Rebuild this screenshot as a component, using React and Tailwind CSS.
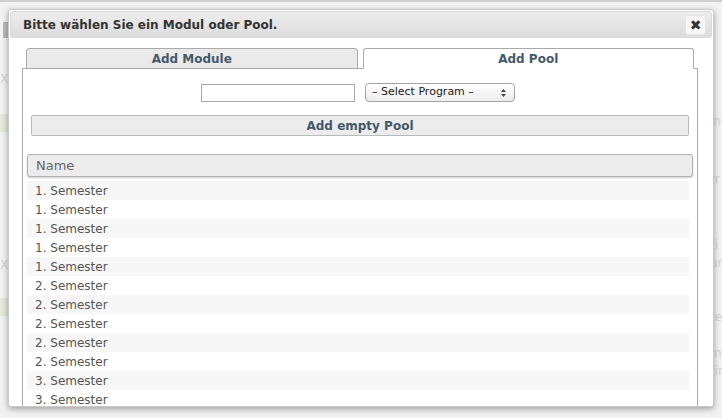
import React, { useState } from "react";

const rows = [
  "1. Semester",
  "1. Semester",
  "1. Semester",
  "1. Semester",
  "1. Semester",
  "2. Semester",
  "2. Semester",
  "2. Semester",
  "2. Semester",
  "2. Semester",
  "3. Semester",
  "3. Semester",
];

const font = { fontFamily: '"DejaVu Sans", Verdana, sans-serif' };

// faded page that sits behind the modal
const Backdrop = () => (
  <div className="absolute inset-0 bg-[#f2f2f2] text-[#c8c8c8] text-[12px]">
    <div className="h-[2px] bg-[#cfcfcf]" />
    <div className="flex">
      <div className="w-[24px] flex flex-col">
        <div className="mt-[20px] ml-[3px] w-[5px] h-[16px] bg-[#b9b9b9]" />
        <div className="mt-[32px] text-[#d2d2d2]">X3</div>
        <div className="mt-[26px] h-[18px] bg-[#e3ead9]" />
        <div className="mt-[124px] text-[#d2d2d2]">X3</div>
        <div className="mt-[24px] h-[18px] bg-[#e3ead9]" />
      </div>
      <div className="flex-1" />
      <div className="w-[12px] flex flex-col text-[#d2d2d2] leading-[18px]">
        <div className="mt-[110px]">In</div>
        <div className="mt-[40px]">rr</div>
        <div className="mt-[48px]">ti</div>
        <div>ur</div>
        <div className="mt-[18px]">:</div>
        <div>te</div>
        <div className="mt-[18px]">m</div>
        <div>tin</div>
      </div>
    </div>
  </div>
);

const App = () => {
  const [tab, setTab] = useState("pool");

  return (
    <div className="relative w-[722px] h-[418px] overflow-hidden" style={font}>
      <Backdrop />

      <div className="absolute left-[8px] top-[9px] w-[706px] h-[398px] bg-white border border-[#c9c9c9] rounded-[3px] shadow-[0_2px_6px_rgba(0,0,0,0.35)] p-[1px] flex flex-col overflow-hidden">
        {/* title bar */}
        <div className="h-[27px] shrink-0 flex items-center justify-between pl-[12px] pr-[5px] rounded-[3px] border border-[#d8d8d8] bg-gradient-to-b from-[#ededed] to-[#dcdcdc]">
          <span className="text-[12px] font-bold text-[#333]">
            Bitte wählen Sie ein Modul oder Pool.
          </span>
          <button className="w-[21px] h-[20px] flex items-center justify-center rounded-[3px] bg-[#f7f7f7] border border-[#e4e4e4] text-[14px] text-[#333] leading-none">
            ✖
          </button>
        </div>

        {/* tabs */}
        <div className="flex-1 flex flex-col pl-[12px] pr-[14px] pt-[10px]">
          <div className="flex gap-[5px] pl-[4px] pr-[4px] relative z-10">
            <button
              onClick={() => setTab("module")}
              className={`flex-1 h-[21px] rounded-t-[3px] border border-[#aaa] text-[12px] font-bold text-[#44596a] ${
                tab === "module" ? "bg-white border-b-white" : "bg-[#eaeaea] border-b-[#aaa]"
              }`}
            >
              Add Module
            </button>
            <button
              onClick={() => setTab("pool")}
              className={`flex-1 h-[21px] rounded-t-[3px] border border-[#aaa] text-[12px] font-bold text-[#44596a] ${
                tab === "pool" ? "bg-white border-b-white" : "bg-[#eaeaea] border-b-[#aaa]"
              }`}
            >
              Add Pool
            </button>
          </div>

          <div className="-mt-[1px] flex-1 border-l border-r border-t border-[#aaa] flex flex-col px-[4px]">
            <div className="flex justify-center items-center gap-[10px] mt-[14px] pr-[4px]">
              <input className="w-[154px] h-[18px] border border-[#a9a9a9] bg-white" />
              <div className="w-[150px] h-[19px] flex items-center justify-between pl-[6px] pr-[8px] rounded-[4px] border border-[#a3a3a3] bg-gradient-to-b from-white to-[#ececec] text-[11px] text-[#222]">
                <span>– Select Program –</span>
                <svg width="5" height="8" viewBox="0 0 5 8">
                  <path d="M0 3 L2.5 0 L5 3 Z M0 5 L2.5 8 L5 5 Z" fill="#444" />
                </svg>
              </div>
            </div>

            <button className="mt-[13px] mx-[4px] h-[21px] rounded-[2px] border border-[#b9b9b9] bg-[#ececec] text-[12px] font-bold text-[#44596a]">
              Add empty Pool
            </button>

            <div className="mt-[18px] h-[23px] flex items-center pl-[8px] rounded-[3px] border border-[#b3b3b3] bg-[#ececec] shadow-[0_1px_2px_rgba(0,0,0,0.2)] text-[13px] text-[#666]">
              Name
            </div>

            <div className="mt-[4px] mr-[4px] flex flex-col">
              {rows.map((r, i) => (
                <div
                  key={i}
                  className={`h-[19px] shrink-0 flex items-center pl-[8px] text-[12px] text-[#555] ${
                    i % 2 === 0 ? "bg-[#f6f7f6]" : "bg-white"
                  }`}
                >
                  {r}
                </div>
              ))}
            </div>
          </div>
        </div>
      </div>
    </div>
  );
};

export default App;
